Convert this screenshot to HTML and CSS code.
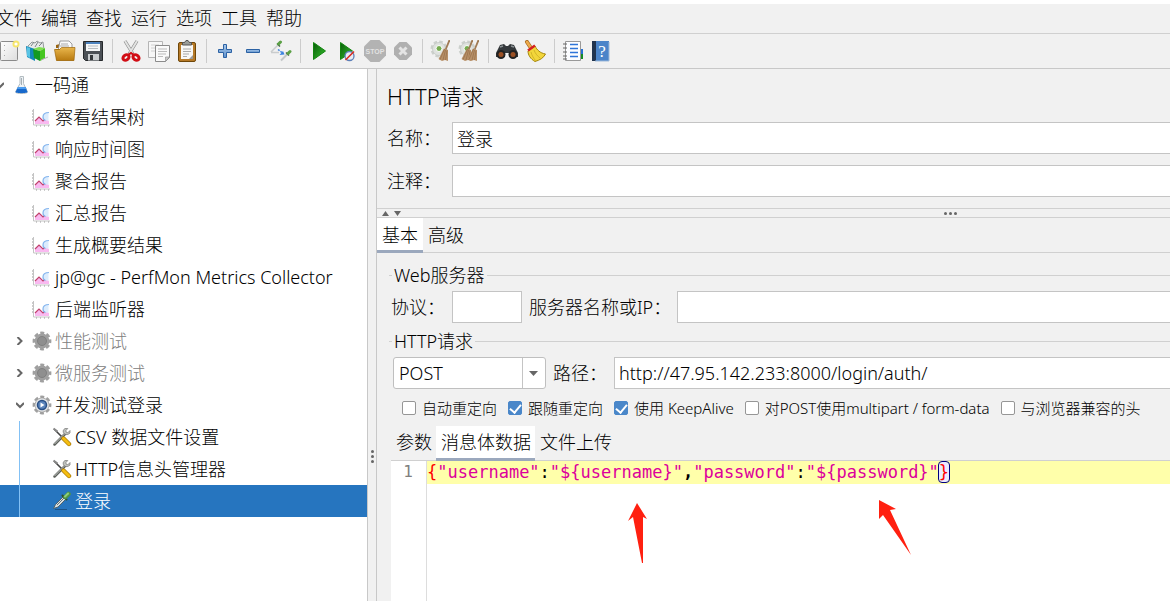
FILE: index.html
```
<!DOCTYPE html>
<html lang="zh-CN">

<head>
    <meta charset="UTF-8">
    <meta name="viewport" content="width=device-width, initial-scale=1.0">
    <title>HTTP请求</title>
    <link rel="stylesheet" href="styles.css">
</head>
<body>
    <!-- Shared icons -->
    <svg class="sprite" aria-hidden="true">
        <defs>
            <linearGradient id="blueFill" x1="0" y1="0" x2="0" y2="1">
                <stop offset="0" stop-color="#a9c8ea"/><stop offset="1" stop-color="#5f92cc"/>
            </linearGradient>
            <linearGradient id="greenFill" x1="0" y1="0" x2="1" y2="1">
                <stop offset="0" stop-color="#0a5c0a"/><stop offset="1" stop-color="#35c22d"/>
            </linearGradient>
            <linearGradient id="goldFill" x1="0" y1="0" x2="0" y2="1">
                <stop offset="0" stop-color="#e9b64c"/><stop offset="1" stop-color="#b87a10"/>
            </linearGradient>
            <linearGradient id="paperFill" x1="0" y1="0" x2="1" y2="1">
                <stop offset="0" stop-color="#fff"/><stop offset="1" stop-color="#ddd"/>
            </linearGradient>
        </defs>
        <symbol id="chart" viewBox="0 0 20 20">
            <path d="M1.500 2v16H18" fill="none" stroke="#c4c4c4"/>
            <path d="M0 4h1M0 7h1M0 10h1M0 13h1M4 19h1M8 19h1M12 19h1M16 19h1" stroke="#999"/>
            <path d="M3 17v-3l4-4 4 4 2-2 4 2v3z" fill="#f9b9f0"/>
            <path d="M3 14l4-4 4 4 2.500-2.500" fill="none" stroke="#c0416c" stroke-width="1.200"/>
            <path d="M16.500 5.500c-3.500 0-5.500 2-5.500 4.500 0 2 2 4 5.500 3.500z" fill="#dcecfd"/>
            <path d="M17 5.500c-4 0-6 2-6 4.500 0 1.500 1 3 2.500 3.500" fill="none" stroke="#86b6ee" stroke-width="1.200"/>
        </symbol>
        <symbol id="gear" viewBox="0 0 20 20">
            <circle cx="10" cy="10" r="7.800" fill="none" stroke="currentColor" stroke-width="3.200" stroke-dasharray="3.800 2.326" stroke-dashoffset="1.900"/>
            <circle cx="10" cy="10" r="7.400" fill="currentColor"/>
        </symbol>
        <symbol id="tools" viewBox="0 0 20 20">
            <path d="M2 2l9 9" stroke="#444" stroke-width="1.600"/>
            <path d="M1.500 1.500l4 3" stroke="#888" stroke-width="2"/>
            <path d="M2.500 17.500L14 6" stroke="#5c605b" stroke-width="2.500" stroke-linecap="round"/>
            <path d="M2.500 17L14 5.500" stroke="#c5c8c4" stroke-width="1"/>
            <path d="M13 1.500c-2 1-2.500 3.500-1 5 1.500 1.600 4 1.500 6-.5V3.500L15.500 6 13.500 4l2.300-2.500z" fill="#bfc2be" stroke="#777" stroke-width=".7"/>
            <path d="M11.500 11.500l5.500 5.500" stroke="#a97905" stroke-width="4.400" stroke-linecap="round"/>
            <path d="M11.500 11.500l5.500 5.500" stroke="#f4bd12" stroke-width="3" stroke-linecap="round"/>
        </symbol>
        <symbol id="gearBroom" viewBox="0 0 22 22">
            <circle cx="9" cy="9" r="7" fill="none" stroke="#ccd0cc" stroke-width="3" stroke-dasharray="3.400 2.098"/>
            <circle cx="9" cy="9" r="6.500" fill="#dfe2df" stroke="#c4c8c4" stroke-width=".8"/>
            <circle cx="9" cy="8.500" r="3" fill="#76ac50" stroke="#fff"/>
        </symbol>
        <symbol id="whisk" viewBox="0 0 12 22">
            <path d="M11.500 0L7.500 10" stroke="#a07a54" stroke-width="1.800"/>
            <path d="M6 8.500l4 1.500 0 11-3-1-3 1-3.500-2z" fill="#b89068"/>
            <path d="M6.500 9L2 19.500M7.500 10L5 20M9 10.500L7.500 20" stroke="#946d46" stroke-width=".7"/>
        </symbol>
        <symbol id="open" viewBox="0 0 8 8">
            <path d="M0 2l4 4 4-4" fill="none" stroke="#666" stroke-width="2"/>
        </symbol>
        <symbol id="closed" viewBox="0 0 8 8">
            <path d="M1.500 0l4 4-4 4" fill="none" stroke="#666" stroke-width="2"/>
        </symbol>
    </svg>

    <nav class="menubar">
        <button type="button">文件</button>
        <button type="button">编辑</button>
        <button type="button">查找</button>
        <button type="button">运行</button>
        <button type="button">选项</button>
        <button type="button">工具</button>
        <button type="button">帮助</button>
    </nav>

    <div class="toolbar">
        <button type="button" aria-label="新建">
            <svg viewBox="0 0 22 22"><rect x="2.500" y="1.500" width="17" height="19" rx="1" fill="url(#paperFill)" stroke="#8a8a8a"/><path d="M6.500 5v12" stroke="#aaa" stroke-dasharray="1 4"/><circle cx="18" cy="4" r="3.500" fill="#f6e66b"/><circle cx="18" cy="4" r="1.600" fill="#fff"/></svg>
        </button>
        <button type="button" aria-label="模板">
            <svg viewBox="0 0 22 22"><path d="M2 6l4-4 3 1 2-2 3 2 3-1 1 8H3z" fill="#e8eaea" stroke="#7d8587" stroke-width=".8"/><path d="M5 6l3-4M9 7l3-5M13 6l3-3" stroke="#7d8587"/><path d="M0 6l9 3v12l-8-4z" fill="#1589b8"/><path d="M1 7l3 1v10l-3-2z" fill="#58c4e5"/><path d="M7 9l7 2v10l-6-3z" fill="#139a20"/><path d="M14 11l5-3v10l-5 3z" fill="#46c621"/><path d="M7 9l6-2 6 1-5 3z" fill="#80df50"/><path d="M15 20l7-3" stroke="#aaa"/></svg>
        </button>
        <button type="button" aria-label="打开">
            <svg viewBox="0 0 22 22"><path d="M2 8V5l4-1 1 4z" fill="#9a6410"/><path d="M6 1h9l3 3v7H4z" fill="#fafafa" stroke="#888" stroke-width=".8"/><path d="M7 4h7M6 6h9" stroke="#aaa"/><path d="M1.500 9h18v11.500h-17z" fill="#a9700e"/><path d="M.5 9.500h5l2-2h13.500l-1 13H2.500z" fill="url(#goldFill)" stroke="#9d670a" stroke-width=".7"/></svg>
        </button>
        <button type="button" aria-label="保存">
            <svg viewBox="0 0 22 22"><path d="M1.500 1.500h19v19h-17l-2-2z" fill="#4b5056" stroke="#25282b"/><path d="M4 2h14v9H4z" fill="#f5f7f8"/><path d="M4 2h14v2H4z" fill="#4c83bf"/><path d="M6 6h10M6 8.500h10" stroke="#b7bdc2"/><path d="M6 14h11v6.500H6z" fill="#c9cdd0"/><path d="M8 15h3v5H8z" fill="#33373b"/></svg>
        </button>
        <span class="sep"></span>
        <button type="button" aria-label="剪切">
            <svg viewBox="0 0 22 22"><path d="M5 1l8 13M17 1L9 14" stroke="#888" stroke-width="3.200"/><path d="M5 1l8 13M17 1L9 14" stroke="#e2e3e2" stroke-width="2"/><ellipse cx="6" cy="17.500" rx="3.300" ry="2.500" transform="rotate(-35 6 17.500)" fill="none" stroke="#d10d15" stroke-width="3"/><ellipse cx="16" cy="17.500" rx="3.300" ry="2.500" transform="rotate(35 16 17.500)" fill="none" stroke="#d10d15" stroke-width="3"/><path d="M8 15l3-2 3 2" fill="none" stroke="#d10d15" stroke-width="2"/></svg>
        </button>
        <button type="button" aria-label="复制">
            <svg viewBox="0 0 22 22"><path d="M.5 1.500h14v16H.5z" fill="#f7f7f7" stroke="#b5b5b5"/><path d="M3 5h8M3 8h5M3 11h5" stroke="#d0d0d0"/><path d="M7.500 5.500h14v12l-4 4h-10z" fill="#fafafa" stroke="#8b8b8b"/><path d="M10 9h9M10 11.500h9M10 14h8M10 16.500h5" stroke="#bbb"/><path d="M21.500 17h-4v4.500z" fill="#ccc" stroke="#888" stroke-width=".6"/></svg>
        </button>
        <button type="button" aria-label="粘贴">
            <svg viewBox="0 0 22 22"><rect x="2.500" y="2.500" width="17" height="19" rx="1.500" fill="#b67a28" stroke="#6f4709"/><path d="M5 5h12v14H5z" fill="#f8f8f6"/><path d="M7 9h8M7 11.500h8M7 14h6M7 16.500h4" stroke="#aaa"/><path d="M13 19l4-4v4z" fill="#999"/><path d="M6.500 5V2.500h2L10 .5h2l1.500 2h2V5z" fill="#999c98" stroke="#555"/></svg>
        </button>
        <span class="sep"></span>
        <button type="button" aria-label="展开">
            <svg viewBox="0 0 22 22"><path d="M9.500 4.500h3v5h5v3h-5v5h-3v-5h-5v-3h5z" fill="url(#blueFill)" stroke="#2c62a4"/></svg>
        </button>
        <button type="button" aria-label="折叠">
            <svg viewBox="0 0 22 22"><path d="M4.500 9.500h13v3h-13z" fill="url(#blueFill)" stroke="#2c62a4"/></svg>
        </button>
        <button type="button" aria-label="切换">
            <svg viewBox="0 0 22 22"><path d="M1 12L7.500 5.500M1 12.500h8" stroke="#c9cccd" stroke-width="1.500"/><path d="M7 3.500l3 3" stroke="#47604a" stroke-width="1.500"/><path d="M8.500 4l2-2" stroke="#5ba045" stroke-width="3" stroke-linecap="round"/><path d="M8 9.500l4 3" stroke="#3b83e0" stroke-width="1.500" stroke-dasharray="2 1"/><path d="M14.500 14.500l-5 .5 3.500-4z" fill="#3b83e0"/><path d="M11 20.500l6-6" stroke="#c3c7c8" stroke-width="2"/><path d="M16 12.500l3 3" stroke="#47604a" stroke-width="1.500"/><path d="M18 13.500l2-2" stroke="#5ba045" stroke-width="3" stroke-linecap="round"/></svg>
        </button>
        <span class="sep"></span>
        <button type="button" aria-label="启动">
            <svg viewBox="0 0 22 22"><path d="M5.500 2.500v17l12-8.500z" fill="url(#greenFill)" stroke="#12860f"/></svg>
        </button>
        <button type="button" aria-label="不停顿开始">
            <svg viewBox="0 0 22 22"><path d="M4.500 2.500v17l12-8.500z" fill="url(#greenFill)" stroke="#12860f"/><circle cx="13.500" cy="16" r="4.500" fill="#e9edf5" stroke="#5b7fb8" stroke-width="1.300"/><path d="M9.500 20l8.500-8.500" stroke="#db2d20" stroke-width="1.600"/></svg>
        </button>
        <button type="button" aria-label="停止" disabled>
            <svg viewBox="0 0 22 22"><path d="M6.500 0h9L22 6.500v9L15.500 22h-9L0 15.500v-9z" fill="#b3b3b3"/><text class="stop-text" x="11" y="14" text-anchor="middle">STOP</text></svg>
        </button>
        <button type="button" aria-label="关闭" disabled>
            <svg viewBox="0 0 22 22"><path d="M7.500 2h7L20 7.500v7L14.500 20h-7L2 14.500v-7z" fill="#b0b0b0"/><path d="M7.500 7.500l7 7M14.500 7.500l-7 7" stroke="#e4e4e4" stroke-width="3"/></svg>
        </button>
        <span class="sep"></span>
        <button type="button" aria-label="清除">
            <svg viewBox="0 0 22 22"><use href="#gearBroom" width="22" height="22"/><use href="#whisk" x="8" width="12" height="22"/></svg>
        </button>
        <button type="button" aria-label="清除全部">
            <svg viewBox="0 0 22 22"><use href="#gearBroom" width="22" height="22"/><use href="#whisk" x="3" width="12" height="22"/><use href="#whisk" x="9" width="12" height="22"/></svg>
        </button>
        <span class="sep"></span>
        <button type="button" aria-label="查找">
            <svg viewBox="0 0 22 22"><path d="M4 5l4-1 2 2h2l2-2 4 1 4 8v4H13v-4H9v4H0v-4z" fill="#34383b"/><path d="M4 7l3-1M15 6l3 1" stroke="#8b9194" stroke-width="1.500"/><circle cx="5" cy="14.500" r="4.500" fill="#222"/><circle cx="17" cy="14.500" r="4.500" fill="#222"/><circle cx="5" cy="14.500" r="2.500" fill="#9b5024"/><circle cx="17" cy="14.500" r="2.500" fill="#9b5024"/></svg>
        </button>
        <button type="button" aria-label="清除查找">
            <svg viewBox="0 0 22 22"><path d="M3 2l4 6" stroke="#a96a1b" stroke-width="4" stroke-linecap="round"/><path d="M3 2l4 6" stroke="#edaa4c" stroke-width="2.500" stroke-linecap="round"/><path d="M4 11l7-5c2 4 5 7 10.500 8-2 4-5.500 6-10.500 7.500C6.500 19 4 15 4 11z" fill="#f2d63b" stroke="#a58608"/><path d="M7 12c1 4 2.500 6 4.500 8.500M10 10c1.500 4 3.500 6 6 8" fill="none" stroke="#d3b428"/><path d="M4 10.500l7-5" stroke="#d42020" stroke-width="2.500"/></svg>
        </button>
        <span class="sep"></span>
        <button type="button" aria-label="函数助手">
            <svg viewBox="0 0 22 22"><path d="M18 9h3v5h-3z" fill="#2670d4"/><path d="M18 14h3v5h-3z" fill="#168b24"/><path d="M3.500 1.500h15v19h-15z" fill="#fcfdff" stroke="#999"/><path d="M8 4.500h8M8 8.500h8M8 12.500h8M8 16.500h8" stroke="#2f75d8" stroke-width="1.500"/><path d="M1 4h4M1 8h4M1 12h4M1 16h4M1 19h4" stroke="#666"/></svg>
        </button>
        <button type="button" aria-label="帮助">
            <svg viewBox="0 0 22 22"><path d="M2 1h17v20H2z" fill="#4b84c9"/><path d="M2 1h4v20H2z" fill="#20344f"/><path d="M19 2v19H5" fill="none" stroke="#9db9d9"/><text class="help-text" x="12" y="17" text-anchor="middle">?</text></svg>
        </button>
    </div>

    <div class="workspace">
        <aside class="sidebar">
            <ul class="tree">
                <li class="node root"><svg class="toggle"><use href="#open"/></svg>
                    <svg class="icon" viewBox="0 0 20 20"><path d="M8 1.500h3.500v7l4 8.500c0 2-12 2-12 0L8 8.500z" fill="#eef3f6" stroke="#b3bcc1"/><path d="M6 12h7.500l2 5c0 1.500-12 1.500-12 0z" fill="#1769cc"/><path d="M6 12h7.500l1 2H5z" fill="#4b9cf0"/><path d="M9.500 3v7" stroke="#a7b0b5"/></svg>一码通</li>
                <li class="node"><svg class="toggle"></svg><svg class="icon"><use href="#chart"/></svg>察看结果树</li>
                <li class="node"><svg class="toggle"></svg><svg class="icon"><use href="#chart"/></svg>响应时间图</li>
                <li class="node"><svg class="toggle"></svg><svg class="icon"><use href="#chart"/></svg>聚合报告</li>
                <li class="node"><svg class="toggle"></svg><svg class="icon"><use href="#chart"/></svg>汇总报告</li>
                <li class="node"><svg class="toggle"></svg><svg class="icon"><use href="#chart"/></svg>生成概要结果</li>
                <li class="node"><svg class="toggle"></svg><svg class="icon"><use href="#chart"/></svg>jp@gc - PerfMon Metrics Collector</li>
                <li class="node"><svg class="toggle"></svg><svg class="icon"><use href="#chart"/></svg>后端监听器</li>
                <li class="node disabled"><svg class="toggle"><use href="#closed"/></svg>
                    <svg class="icon" viewBox="0 0 20 20"><use href="#gear"/><circle cx="10" cy="10" r="4.500" fill="#8f8f8f" stroke="#808080"/></svg>性能测试</li>
                <li class="node disabled"><svg class="toggle"><use href="#closed"/></svg>
                    <svg class="icon" viewBox="0 0 20 20"><use href="#gear"/><circle cx="10" cy="10" r="4.500" fill="#8f8f8f" stroke="#808080"/></svg>微服务测试</li>
                <li class="node group"><svg class="toggle"><use href="#open"/></svg>
                    <svg class="icon" viewBox="0 0 20 20"><use href="#gear"/><circle cx="10" cy="10" r="6.800" fill="#dfe1e3"/><circle cx="10" cy="10" r="4.500" fill="#5d86bd" stroke="#294f85" stroke-width="1.500"/><path d="M8.500 7.500v5l4-2.500z" fill="#fff"/></svg>并发测试登录</li>
                <li class="node child"><svg class="toggle"></svg><svg class="icon"><use href="#tools"/></svg>CSV 数据文件设置</li>
                <li class="node child"><svg class="toggle"></svg><svg class="icon"><use href="#tools"/></svg>HTTP信息头管理器</li>
                <li class="node child selected"><svg class="toggle"></svg>
                    <svg class="icon" viewBox="0 0 20 20"><path d="M3 18.500h12" stroke="#1c5388"/><path d="M1.500 17.500l2-4 8-8 2.500 2.500-8 8z" fill="#d8dfe0" stroke="#4c5b60" stroke-width=".9"/><path d="M5 14l7-7" stroke="#667276"/><path d="M10.500 4.500l4 4" stroke="#2c4d2d" stroke-width="2" stroke-linecap="round"/><path d="M13.500 6l3-3" stroke="#4f9644" stroke-width="4.500" stroke-linecap="round"/><path d="M13 5.500l3-3" stroke="#8fce7c" stroke-width="2" stroke-linecap="round"/></svg>登录</li>
            </ul>
        </aside>

        <div class="splitter"><i></i><i></i><i></i></div>

        <main class="panel">
            <section class="header">
                <h1>HTTP请求</h1>
                <div class="field-row">
                    <label for="name">名称：</label>
                    <input type="text" id="name" value="登录">
                </div>
                <div class="field-row">
                    <label for="comment">注释：</label>
                    <input type="text" id="comment">
                </div>
            </section>

            <div class="divider">
                <svg viewBox="0 0 20 5"><path d="M0 5h7L3.500 0zM12 0h7l-3.500 5z" fill="#666"/></svg>
                <span class="grip"><i></i><i></i><i></i></span>
            </div>

            <div class="tabs">
                <button type="button" class="tab active">基本</button>
                <button type="button" class="tab">高级</button>
            </div>

            <div class="content">
                <fieldset class="group-box">
                    <legend>Web服务器</legend>
                    <div class="server-row">
                        <label for="protocol" class="protocol-label">协议：</label>
                        <input type="text" id="protocol" class="protocol">
                        <label for="server" class="server-label">服务器名称或IP：</label>
                        <input type="text" id="server" class="grow">
                    </div>
                </fieldset>

                <fieldset class="group-box">
                    <legend>HTTP请求</legend>
                    <div class="path-row">
                        <span class="select-wrap">
                            <select id="method" aria-label="方法">
                                <option>POST</option>
                                <option>GET</option>
                            </select>
                            <svg viewBox="0 0 23 30"><path d="M.5 0v30" stroke="#c4c4c4"/><path d="M7 13h9l-4.500 5z" fill="#666"/></svg>
                        </span>
                        <label for="path" class="path-label">路径：</label>
                        <input type="text" id="path" class="grow" value="http://47.95.142.233:8000/login/auth/">
                    </div>
                    <div class="checks">
                        <label><input type="checkbox">自动重定向</label>
                        <label><input type="checkbox" checked>跟随重定向</label>
                        <label><input type="checkbox" checked>使用 KeepAlive</label>
                        <label><input type="checkbox">对POST使用multipart / form-data</label>
                        <label><input type="checkbox">与浏览器兼容的头</label>
                    </div>
                </fieldset>

                <div class="tabs body-tabs">
                    <button type="button" class="tab">参数</button>
                    <button type="button" class="tab active">消息体数据</button>
                    <button type="button" class="tab">文件上传</button>
                </div>

                <div class="editor">
                    <div class="gutter">1</div>
                    <pre class="code"><code class="line"><span class="brace">{</span><span class="str">"username"</span>:<span class="str">"${username}"</span><b>,</b><span class="str">"password"</span>:<span class="str">"${password}"</span><span class="brace match">}</span></code></pre>
                    <svg class="arrow arrow-user" viewBox="0 0 20 60"><path d="M9 0l10 16-4-2v46h-1L5 14l-5 4z"/></svg>
                    <svg class="arrow arrow-pass" viewBox="0 0 34 56"><path d="M0 0l17 9-6 1 21 45L4 15l-4 4z"/></svg>
                </div>
            </div>
        </main>
    </div>
</body>
</html>
```

FILE: styles.css
```
* {
    box-sizing: border-box;
}

body {
    margin: 0;
    padding-top: 4px;
    height: 100vh;
    display: flex;
    flex-direction: column;
    overflow: hidden;
    background: white;
    color: #000;
    font-family: "Noto Sans", "Noto Sans CJK SC", sans-serif;
    font-size: 18px;
    font-weight: 300;
    line-height: 24px;
}

button,
input,
select {
    font: inherit;
    color: inherit;
}

button {
    border: 0;
    padding: 0;
    background: none;
}

svg {
    flex: none;
}

.sprite {
    position: absolute;
    width: 0;
    height: 0;
}

/* Menu and toolbar */
.menubar {
    display: flex;
    gap: 9px;
    height: 30px;
    padding-bottom: 1px;
    background: #f1f1f1;
    border-bottom: 1px solid #d0d0d0;
}

.menubar button {
    white-space: nowrap;
}

.menubar button:first-child {
    margin-left: -4px;
}

.toolbar {
    display: flex;
    height: 35px;
    background: #f1f1f1;
    border-bottom: 1px solid #c8c8c8;
}

.toolbar button {
    display: flex;
    align-items: center;
    justify-content: center;
    width: 28px;
}

.toolbar button:first-child {
    margin-left: -5px;
}

.toolbar svg {
    width: 22px;
    height: 22px;
}

.sep {
    width: 1px;
    margin: 5px 4px 5px 5px;
    background: #ccc;
}

.stop-text {
    font: bold 7px "Liberation Sans", sans-serif;
    fill: #e2e2e2;
}

.help-text {
    font: 17px "Liberation Serif", serif;
    fill: #fff;
}

/* Test plan tree */
.workspace {
    display: flex;
    flex: 1;
    min-height: 0;
    background: #f1f1f1;
}

.sidebar {
    flex: 0 0 368px;
    overflow: hidden;
    background: white;
    border-right: 1px solid #c8c8c8;
}

.tree {
    margin: 0 0 0 -4px;
    padding: 0;
    list-style: none;
}

.node {
    display: flex;
    align-items: center;
    height: 32px;
    padding-left: 20px;
    white-space: nowrap;
}

.node.root {
    padding-left: 0;
}

.node.child {
    position: relative;
    padding-left: 40px;
}

.node.child::before {
    content: "";
    position: absolute;
    left: 23px;
    top: 0;
    bottom: 0;
    width: 1px;
    background: #83c1f5;
}

.node.disabled {
    color: #808080;
}

.node.selected {
    background: #2675bf;
    color: white;
}

.toggle {
    width: 8px;
    height: 8px;
    margin-right: 8px;
}

.icon {
    width: 20px;
    height: 20px;
    margin-right: 3px;
    color: #a0a0a0;
}

.splitter {
    flex: 0 0 9px;
    display: flex;
    flex-direction: column;
    align-items: center;
    gap: 2px;
    padding-top: 381px;
    border-right: 1px solid #c8c8c8;
}

.splitter i,
.grip i {
    width: 3px;
    height: 3px;
    border-radius: 50%;
    background: #666;
}

/* Request panel */
.panel {
    flex: 1;
    min-width: 0;
    display: flex;
    flex-direction: column;
}

.header {
    display: flex;
    flex-direction: column;
    gap: 11px;
    padding: 12px 0 11px 10px;
}

.header h1 {
    margin: 0;
    font-size: 22px;
    font-weight: 300;
    line-height: 30px;
}

.field-row,
.server-row,
.path-row {
    display: flex;
    align-items: center;
}

.field-row label {
    flex: 0 0 65px;
}

input[type="text"] {
    min-width: 0;
    height: 32px;
    padding: 0 4px;
    border: 1px solid #c4c4c4;
    background: white;
}

.field-row input,
input.grow {
    flex: 1;
    margin-right: -1px;
}

.divider {
    display: flex;
    align-items: center;
    height: 10px;
    border-top: 1px solid #d0d0d0;
    border-bottom: 1px solid #d0d0d0;
}

.divider svg {
    width: 20px;
    height: 5px;
    margin-left: 5px;
}

.grip {
    display: flex;
    gap: 2px;
    margin-left: 542px;
}

.tabs {
    display: flex;
    height: 35px;
    border-bottom: 1px solid #d0d0d0;
}

.tab {
    height: 35px;
    padding: 2px 5px 0;
    border-bottom: 3px solid transparent;
    white-space: nowrap;
}

.tab.active {
    background: white;
    border-bottom-color: #9ba8bd;
}

.content {
    flex: 1;
    display: flex;
    flex-direction: column;
    min-height: 0;
    padding: 10px 0 0 12px;
}

.group-box {
    min-width: 0;
    margin: 0;
    padding: 0;
    border: 0;
    border-top: 1px solid #d0d0d0;
}

.group-box legend {
    margin-left: 3px;
    padding: 0 2px;
    line-height: 24px;
}

.server-row {
    padding: 4px 0 6px 2px;
}

.protocol-label {
    width: 61px;
}

.protocol {
    width: 70px;
}

.server-label {
    width: 155px;
    padding-left: 7px;
    white-space: nowrap;
}

.path-row {
    padding: 4px 0 0 4px;
}

.select-wrap {
    position: relative;
    width: 153px;
    height: 32px;
}

.select-wrap select {
    appearance: none;
    width: 100%;
    height: 32px;
    padding: 0 28px 0 5px;
    border: 1px solid #bfbfbf;
    border-radius: 3px;
    background: white;
}

.select-wrap svg {
    position: absolute;
    top: 1px;
    right: 1px;
    width: 23px;
    height: 30px;
    pointer-events: none;
}

.path-label {
    width: 68px;
    padding-left: 7px;
}

.checks {
    display: flex;
    gap: 11px;
    height: 37px;
    padding-left: 13px;
    font-size: 15px;
    white-space: nowrap;
}

.checks label {
    display: flex;
    align-items: center;
}

.checks input {
    appearance: none;
    width: 14px;
    height: 14px;
    margin: 0 6px 0 0;
    border: 1px solid #969696;
    border-radius: 2px;
    background: white;
}

.checks input:checked {
    display: grid;
    place-items: center;
    border-color: #4a87c9;
    background: #4a87c9;
}

.checks input:checked::after {
    content: "";
    width: 5px;
    height: 9px;
    margin-bottom: 2px;
    border: solid white;
    border-width: 0 2px 2px 0;
    transform: rotate(40deg);
}

.body-tabs {
    margin-left: 2px;
}

.body-tabs .tab {
    padding: 0 4px 0 5px;
}

/* Message body */
.editor {
    position: relative;
    flex: 1;
    display: flex;
    margin-left: 2px;
    background: white;
    font-family: "DejaVu Sans Mono", monospace;
    font-size: 17px;
    font-weight: 400;
    line-height: 22px;
}

.gutter {
    width: 36px;
    padding-right: 13px;
    border-right: 1px solid #ddd;
    color: #808080;
    font-size: 16px;
    text-align: right;
}

.code {
    flex: 1;
    margin: 0;
    font: inherit;
}

.line {
    display: block;
    padding-bottom: 1px;
    background: #ffffaa;
    font: inherit;
}

.brace {
    color: #f00;
}

.str {
    color: #dc009c;
}

.match {
    border-radius: 3px;
    outline: 1px solid #000080;
    background: #eaeaff;
}

.arrow {
    position: absolute;
    fill: #ff2010;
}

.arrow-user {
    left: 237px;
    top: 42px;
    width: 20px;
    height: 60px;
}

.arrow-pass {
    left: 488px;
    top: 39px;
    width: 34px;
    height: 56px;
}
```
